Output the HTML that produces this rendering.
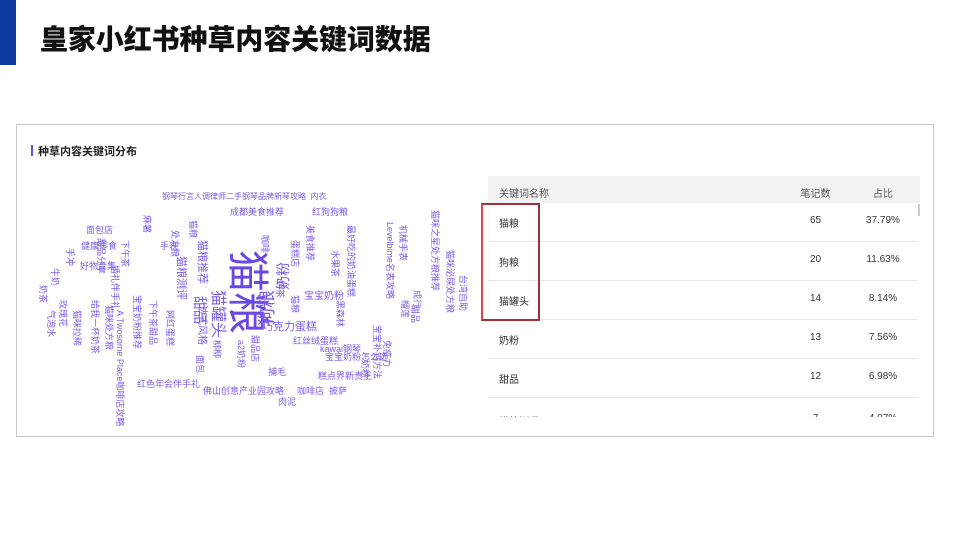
<!DOCTYPE html>
<html><head><meta charset="utf-8"><style>
*{margin:0;padding:0;box-sizing:border-box}
body{width:960px;height:540px;background:#fff;position:relative;overflow:hidden;font-family:"Liberation Sans","Noto Sans CJK SC",sans-serif}
.bar{position:absolute;left:0;top:0;width:16px;height:65px;background:#0a3aa0}
.title{position:absolute;left:40px;top:18px;font-size:28px;font-weight:900;color:#111;letter-spacing:-0.1px}
.panel{position:absolute;left:16px;top:124px;width:918px;height:313px;border:1px solid #c8c8c8}
.sub{position:absolute;left:38px;top:143px;font-size:11px;font-weight:bold;color:#222}
.subbar{position:absolute;left:31px;top:145px;width:2px;height:11px;background:#6b4fe0}
.th{position:absolute;left:488px;top:176px;width:432px;height:27px;background:#f2f2f2;font-size:10px;color:#555}
.row{position:absolute;left:488px;width:430px;height:39px;border-bottom:1px solid #e6e6e6;font-size:10px;color:#333}
.c1{position:absolute;left:11px;top:12px}
.c2{position:absolute;left:310px;width:35px;text-align:center;top:12px}
.c3{position:absolute;left:370px;width:50px;text-align:center;top:12px}
.red{position:absolute;left:481px;top:203px;width:59px;height:118px;border:2px solid #a0303a;border-left-color:#e04850}
.scroll{position:absolute;left:918px;top:204px;width:2px;height:12px;background:#ccc}
.w{position:absolute;color:#7b5ce8;font-size:9px;white-space:nowrap;line-height:1}
.v{writing-mode:vertical-rl;text-orientation:sideways}
.clip{position:absolute;left:488px;top:398px;width:432px;height:19px;overflow:hidden}
</style></head><body>
<div class="bar"></div>
<div class="title">皇家小红书种草内容关键词数据</div>
<div class="panel"></div>
<div class="subbar"></div>
<div class="sub">种草内容关键词分布</div>
<div class="th"><span class="c1" style="top:9px">关键词名称</span><span class="c2" style="top:9px">笔记数</span><span class="c3" style="top:9px">占比</span></div>
<div class="row" style="top:203px"><span class="c1">猫粮</span><span class="c2">65</span><span class="c3">37.79%</span></div>
<div class="row" style="top:242px"><span class="c1">狗粮</span><span class="c2">20</span><span class="c3">11.63%</span></div>
<div class="row" style="top:281px"><span class="c1">猫罐头</span><span class="c2">14</span><span class="c3">8.14%</span></div>
<div class="row" style="top:320px"><span class="c1">奶粉</span><span class="c2">13</span><span class="c3">7.56%</span></div>
<div class="row" style="top:359px"><span class="c1">甜品</span><span class="c2">12</span><span class="c3">6.98%</span></div>
<div class="clip"><div class="row" style="left:0;top:3px;border:none"><span class="c1">猫粮测评</span><span class="c2">7</span><span class="c3">4.07%</span></div></div>
<div class="red"></div>
<div class="scroll"></div>

<div class="w v" style="left:226px;top:250px;font-size:42px;color:#6a48e6">猫粮</div>
<div class="w v" style="left:209px;top:290px;font-size:16px">猫罐头</div>
<div class="w v" style="left:258px;top:290px;font-size:18px;transform:rotate(180deg)">狗粮</div>
<div class="w v" style="left:276px;top:262px;font-size:14px;transform:rotate(180deg)">奶粉</div>
<div class="w v" style="left:193px;top:296px;font-size:14px">甜品</div>
<div class="w v" style="left:175px;top:256px;font-size:11px">猫粮测评</div>
<div class="w v" style="left:196px;top:240px;font-size:11px">猫粮推荐</div>
<div class="w v" style="left:196px;top:305px;font-size:10px">法式风格</div>
<div class="w" style="left:304px;top:292px;font-size:10px">宝宝奶粉</div>
<div class="w" style="left:262px;top:322px;font-size:11px">巧克力蛋糕</div>
<div class="w" style="left:162px;top:193px;font-size:8px">钢琴行言人调律师二手钢琴品牌新琴攻略 &nbsp;内衣</div>
<div class="w" style="left:230px;top:208px">成都美食推荐</div>
<div class="w" style="left:312px;top:208px">红狗狗粮</div>
<div class="w" style="left:86px;top:226px">面包店</div>
<div class="w" style="left:81px;top:242px">健康零食</div>
<div class="w" style="left:80px;top:262px">好物合集</div>
<div class="w" style="left:160px;top:242px">手表</div>
<div class="w" style="left:320px;top:345px">kawai钢琴</div>
<div class="w" style="left:293px;top:337px">红丝绒蛋糕</div>
<div class="w" style="left:325px;top:353px">宝宝奶粉怎么选</div>
<div class="w" style="left:318px;top:372px">糕点界新贵王</div>
<div class="w" style="left:137px;top:380px">红色年会伴手礼</div>
<div class="w" style="left:203px;top:387px">佛山创意产业园攻略</div>
<div class="w" style="left:297px;top:387px">咖啡店 &nbsp;披萨</div>
<div class="w" style="left:278px;top:398px">肉泥</div>
<div class="w" style="left:268px;top:368px">捕毛</div>
<div class="w v" style="left:120px;top:240px">下午茶</div>
<div class="w v" style="left:115px;top:310px">A Twosome Place咖啡店攻略</div>
<div class="w v" style="left:132px;top:295px">宝宝奶粉推荐</div>
<div class="w v" style="left:148px;top:300px">下午茶甜品</div>
<div class="w v" style="left:165px;top:310px">网红蛋糕</div>
<div class="w v" style="left:104px;top:305px">猫咪处方粮</div>
<div class="w v" style="left:90px;top:300px">给我一杯奶茶</div>
<div class="w v" style="left:72px;top:310px">猫咪拉稀</div>
<div class="w v" style="left:58px;top:300px">玫瑰花</div>
<div class="w v" style="left:46px;top:310px">气泡水</div>
<div class="w v" style="left:385px;top:222px">Levelbime名表攻略</div>
<div class="w v" style="left:398px;top:225px">机械手表</div>
<div class="w v" style="left:412px;top:290px">成行</div>
<div class="w v" style="left:430px;top:210px">猫咪之星处方粮推荐</div>
<div class="w v" style="left:445px;top:250px">猫咪泌尿处方粮</div>
<div class="w v" style="left:458px;top:275px">台湾自助</div>
<div class="w v" style="left:372px;top:325px">宝宝补钙方法</div>
<div class="w v" style="left:382px;top:340px">免疫力</div>
<div class="w v" style="left:330px;top:250px">水果茶</div>
<div class="w v" style="left:305px;top:225px">美食推荐</div>
<div class="w v" style="left:290px;top:240px">蛋糕店</div>
<div class="w v" style="left:346px;top:225px">最好吃的奶油蛋糕</div>
<div class="w v" style="left:260px;top:235px">咖啡</div>
<div class="w v" style="left:290px;top:295px">猫粮</div>
<div class="w v" style="left:275px;top:280px">奶茶</div>
<div class="w v" style="left:250px;top:335px">甜品店</div>
<div class="w v" style="left:236px;top:340px">a2奶粉</div>
<div class="w v" style="left:212px;top:340px">柳柳</div>
<div class="w v" style="left:195px;top:355px">面包</div>
<div class="w v" style="left:170px;top:230px">处方粮</div>
<div class="w v" style="left:188px;top:220px">猫粮</div>
<div class="w v" style="left:110px;top:265px">婚礼伴手礼</div>
<div class="w v" style="left:96px;top:238px">甜品分享</div>
<div class="w v" style="left:65px;top:248px">手冲</div>
<div class="w v" style="left:50px;top:268px">牛奶</div>
<div class="w v" style="left:38px;top:285px">奶茶</div>
<div class="w v" style="left:360px;top:360px">奶粉</div>
<div class="w v" style="left:410px;top:305px">甜品</div>
<div class="w v" style="left:335px;top:300px">黑森林</div>
<div class="w v" style="left:142px;top:215px">麻薯</div>
<div class="w v" style="left:400px;top:300px">榴莲</div>
</body></html>
